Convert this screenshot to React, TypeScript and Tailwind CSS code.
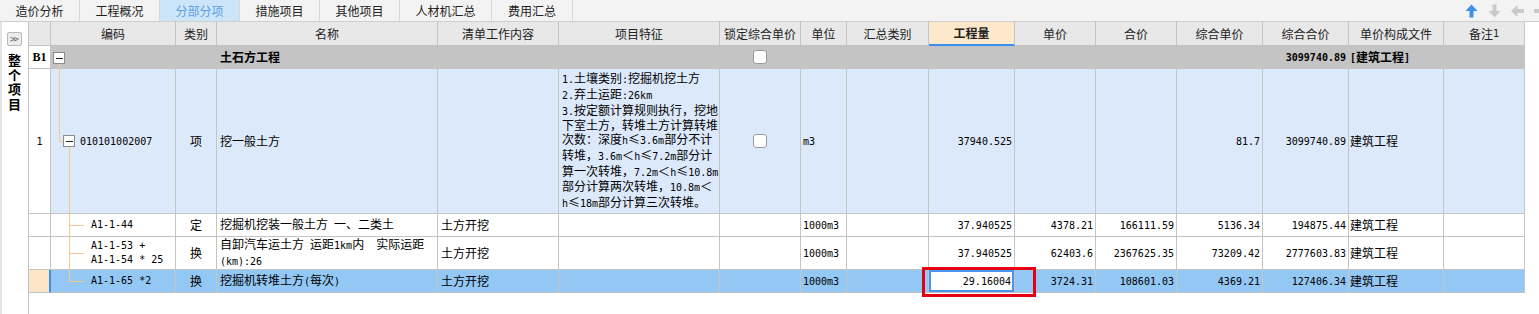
import React from "react";

const COLS =
  "grid grid-cols-[22px_125px_41px_221px_121px_161px_81px_46px_82px_86px_81px_81px_86px_86px_95px_81px]";
const MONO = "font-['DejaVu_Sans_Mono',monospace] text-[10px] whitespace-pre";
const LINE = "bg-[#f6c98d]";

// ascii runs get the narrow mono face, like the half-width glyphs of the original
function Mix({ text }: { text: string }) {
  const parts = text.split(/([\x20-\x7e]+)/).filter(Boolean);
  return (
    <>
      {parts.map((p, i) =>
        /^[\x20-\x7e]+$/.test(p) ? (
          <span key={i} className={MONO}>
            {p}
          </span>
        ) : (
          <span key={i}>{p}</span>
        ),
      )}
    </>
  );
}

function Cell({
  children,
  className = "",
}: {
  children?: React.ReactNode;
  className?: string;
}) {
  return (
    <div
      className={`border-r border-b border-[#c4c4c4] flex items-center overflow-hidden whitespace-nowrap ${className}`}
    >
      {children}
    </div>
  );
}

function Num({ v, bold }: { v?: string; bold?: boolean }) {
  return (
    <Cell className="justify-end pr-[2px]">
      {v && <span className={`${MONO} ${bold ? "font-bold" : ""}`}>{v}</span>}
    </Cell>
  );
}

function MinusBox({ className }: { className: string }) {
  return (
    <span
      className={`absolute w-[12px] h-[12px] bg-white border border-[#8c8c8c] flex items-center justify-center ${className}`}
    >
      <span className="w-[7px] h-px bg-[#222]" />
    </span>
  );
}

function Check() {
  return (
    <span className="w-[14px] h-[14px] bg-white border border-[#9b9b9b] rounded-[3px]" />
  );
}

function Arrow({ dir, color }: { dir: "up" | "down" | "left" | "right"; color: string }) {
  const rot = { up: 0, down: 180, left: 270, right: 90 }[dir];
  return (
    <svg width="13" height="14" viewBox="0 0 13 14">
      <g transform={`rotate(${rot} 6.5 7)`}>
        <polygon points="6.5,0.5 12.5,7 8.5,7 8.5,13.5 4.5,13.5 4.5,7 0.5,7" fill={color} />
      </g>
    </svg>
  );
}

const tabs = [
  { label: "造价分析", w: "w-[80px]" },
  { label: "工程概况", w: "w-[80px]" },
  { label: "分部分项", w: "w-[80px]", active: true },
  { label: "措施项目", w: "w-[80px]" },
  { label: "其他项目", w: "w-[80px]" },
  { label: "人材机汇总", w: "w-[92px]" },
  { label: "费用汇总", w: "w-[81px]" },
];

function TabBar() {
  return (
    <div className="h-[22px] flex bg-[#f3f3f3] border-b border-[#cfcfcf]">
      {tabs.map((t) => (
        <div
          key={t.label}
          className={`${t.w} h-full flex items-center justify-center border-r border-[#d8d8d8] ${
            t.active ? "bg-[#cde5f8] text-[#5a9fe4]" : "text-[#222]"
          }`}
        >
          {t.label}
        </div>
      ))}
      <div className="ml-auto -mr-[8px] flex items-center gap-[10px] pl-[2px]">
        <Arrow dir="up" color="#3b8ff0" />
        <Arrow dir="down" color="#cacaca" />
        <Arrow dir="left" color="#cacaca" />
        <Arrow dir="right" color="#cacaca" />
      </div>
    </div>
  );
}

function Sidebar() {
  return (
    <div className="w-[29px] h-[292px] shrink-0 bg-white border-l-2 border-l-[#e4e4e4] border-r border-r-[#c4c4c4] flex flex-col items-center pt-[10px] pr-[1px]">
      <div className="w-[15px] h-[14px] bg-[#ececec] border border-[#b9b9b9] rounded-[2px] flex items-center justify-center">
        <span className="font-['DejaVu_Sans_Mono',monospace] text-[9px] leading-none tracking-[-2px] text-[#666] -ml-[2px]">
          &gt;&gt;
        </span>
      </div>
      <div className="mt-[7px] text-[13px] leading-[14.5px] font-bold text-black w-[13px] text-center">
        整个项目
      </div>
    </div>
  );
}

const features = [
  "1.土壤类别:挖掘机挖土方",
  "2.弃土运距:26km",
  "3.按定额计算规则执行，挖地",
  "下室土方，转堆土方计算转堆",
  "次数：深度h≤3.6m部分不计",
  "转堆，3.6m＜h≤7.2m部分计",
  "算一次转堆，7.2m＜h≤10.8m",
  "部分计算两次转堆，10.8m＜",
  "h≤18m部分计算三次转堆。",
];

const heads = [
  "",
  "编码",
  "类别",
  "名称",
  "清单工作内容",
  "项目特征",
  "锁定综合单价",
  "单位",
  "汇总类别",
  "工程量",
  "单价",
  "合价",
  "综合单价",
  "综合合价",
  "单价构成文件",
  "备注1",
];

type Sub = {
  code: string[];
  kind: string;
  name: string[];
  qty: string;
  price: string;
  total: string;
  unitAll: string;
  totalAll: string;
  h: string;
  selected?: boolean;
  last?: boolean;
};

const subs: Sub[] = [
  {
    code: ["A1-1-44"],
    kind: "定",
    name: ["挖掘机挖装一般土方 一、二类土"],
    qty: "37.940525",
    price: "4378.21",
    total: "166111.59",
    unitAll: "5136.34",
    totalAll: "194875.44",
    h: "h-[23px]",
  },
  {
    code: ["A1-1-53 +", "A1-1-54 * 25"],
    kind: "换",
    name: ["自卸汽车运土方 运距1km内  实际运距", "(km):26"],
    qty: "37.940525",
    price: "62403.6",
    total: "2367625.35",
    unitAll: "73209.42",
    totalAll: "2777603.83",
    h: "h-[33px]",
  },
  {
    code: ["A1-1-65 *2"],
    kind: "换",
    name: ["挖掘机转堆土方(每次)"],
    qty: "29.16004",
    price: "3724.31",
    total: "108601.03",
    unitAll: "4369.21",
    totalAll: "127406.34",
    h: "h-[23px]",
    selected: true,
    last: true,
  },
];

function SubRow({ r }: { r: Sub }) {
  const bg = r.selected ? "bg-[#93c7f4]" : "bg-white";
  return (
    <div className={`${COLS} ${r.h} ${bg}`}>
      <Cell
        className={
          r.selected ? "bg-[#fde6c7] border-r-2 border-r-[#3b8ff0]" : "bg-white"
        }
      />
      <Cell className="relative pl-[40px]">
        <span className={`absolute left-[18px] top-0 w-px ${LINE} ${r.last ? "h-[12px]" : "bottom-0"}`} />
        <span className={`absolute left-[18px] top-1/2 w-[15px] h-px ${LINE}`} />
        <div className="leading-[14px]">
          {r.code.map((c) => (
            <div key={c} className={MONO}>
              {c}
            </div>
          ))}
        </div>
      </Cell>
      <Cell className="justify-center">{r.kind}</Cell>
      <Cell className="pl-[3px]">
        <div className="leading-[14px]">
          {r.name.map((n) => (
            <div key={n}>
              <Mix text={n} />
            </div>
          ))}
        </div>
      </Cell>
      <Cell className="pl-[3px]">土方开挖</Cell>
      <Cell />
      <Cell />
      <Cell className="pl-[2px]">
        <span className={MONO}>1000m3</span>
      </Cell>
      <Cell />
      {r.selected ? (
        <Cell>
          <div className="w-full h-full bg-white border-2 border-[#4896f0] flex items-center justify-end pr-[1px]">
            <span className={MONO}>{r.qty}</span>
          </div>
        </Cell>
      ) : (
        <Num v={r.qty} />
      )}
      <Num v={r.price} />
      <Num v={r.total} />
      <Num v={r.unitAll} />
      <Num v={r.totalAll} />
      <Cell className="pl-[1px]">建筑工程</Cell>
      <Cell />
    </div>
  );
}

export default function App() {
  return (
    <div className="relative w-[1539px] h-[314px] overflow-hidden bg-white text-[12px] text-black font-['Noto_Sans_CJK_SC',sans-serif]">
      <TabBar />
      <div className="flex">
        <Sidebar />
        <div className="flex flex-col">
          {/* header */}
          <div className={`${COLS} h-[24px] bg-[#e8e8e8] text-[#222]`}>
            {heads.map((h, i) =>
              h === "工程量" ? (
                <Cell
                  key={i}
                  className="justify-center bg-[#fde8cb] font-bold border-b-2 border-b-[#3b8ff0]"
                >
                  {h}
                </Cell>
              ) : (
                <Cell key={i} className="justify-center">
                  <Mix text={h} />
                </Cell>
              ),
            )}
          </div>

          {/* B1 */}
          <div className={`${COLS} h-[23px] bg-[#c4c4c4]`}>
            <Cell className="bg-white justify-center font-bold font-['Liberation_Serif',serif]">
              B1
            </Cell>
            <Cell className="relative">
              <MinusBox className="left-[2px] top-[6px]" />
              <span className={`absolute left-[8px] top-[18px] bottom-0 w-px ${LINE}`} />
            </Cell>
            <Cell />
            <Cell className="pl-[3px] font-bold">土石方工程</Cell>
            <Cell />
            <Cell />
            <Cell className="justify-center">
              <Check />
            </Cell>
            <Cell />
            <Cell />
            <Cell />
            <Cell />
            <Cell />
            <Cell />
            <Num v="3099740.89" bold />
            <Cell className="pl-[1px] font-bold">
              <span className={`${MONO} font-bold`}>[</span>建筑工程
              <span className={`${MONO} font-bold`}>]</span>
            </Cell>
            <Cell />
          </div>

          {/* 1 */}
          <div className={`${COLS} h-[145px] bg-[#dce9fb]`}>
            <Cell className="bg-white justify-center">
              <span className={MONO}>1</span>
            </Cell>
            <Cell className="relative pl-[29px]">
              <span className={`absolute left-[8px] top-0 h-[72px] w-px ${LINE}`} />
              <span className={`absolute left-[8px] top-[72px] w-[4px] h-px ${LINE}`} />
              <MinusBox className="left-[12px] top-[66px]" />
              <span className={`absolute left-[18px] top-[78px] bottom-0 w-px ${LINE}`} />
              <span className={MONO}>010101002007</span>
            </Cell>
            <Cell className="justify-center">项</Cell>
            <Cell className="pl-[3px]">挖一般土方</Cell>
            <Cell />
            <Cell className="items-start pl-[3px] pt-[2px]">
              <div className="leading-[13.75px]">
                {features.map((f) => (
                  <div key={f}>
                    <Mix text={f} />
                  </div>
                ))}
              </div>
            </Cell>
            <Cell className="justify-center">
              <Check />
            </Cell>
            <Cell className="pl-[2px]">
              <span className={MONO}>m3</span>
            </Cell>
            <Cell />
            <Num v="37940.525" />
            <Num />
            <Num />
            <Num v="81.7" />
            <Num v="3099740.89" />
            <Cell className="pl-[1px]">建筑工程</Cell>
            <Cell />
          </div>

          {subs.map((r) => (
            <SubRow key={r.code[0]} r={r} />
          ))}
        </div>
      </div>

      {/* annotation box around the edited quantity */}
      <div className="absolute left-[922px] top-[267px] w-[114px] h-[30px] border-[3px] border-[#e60012]" />
    </div>
  );
}
